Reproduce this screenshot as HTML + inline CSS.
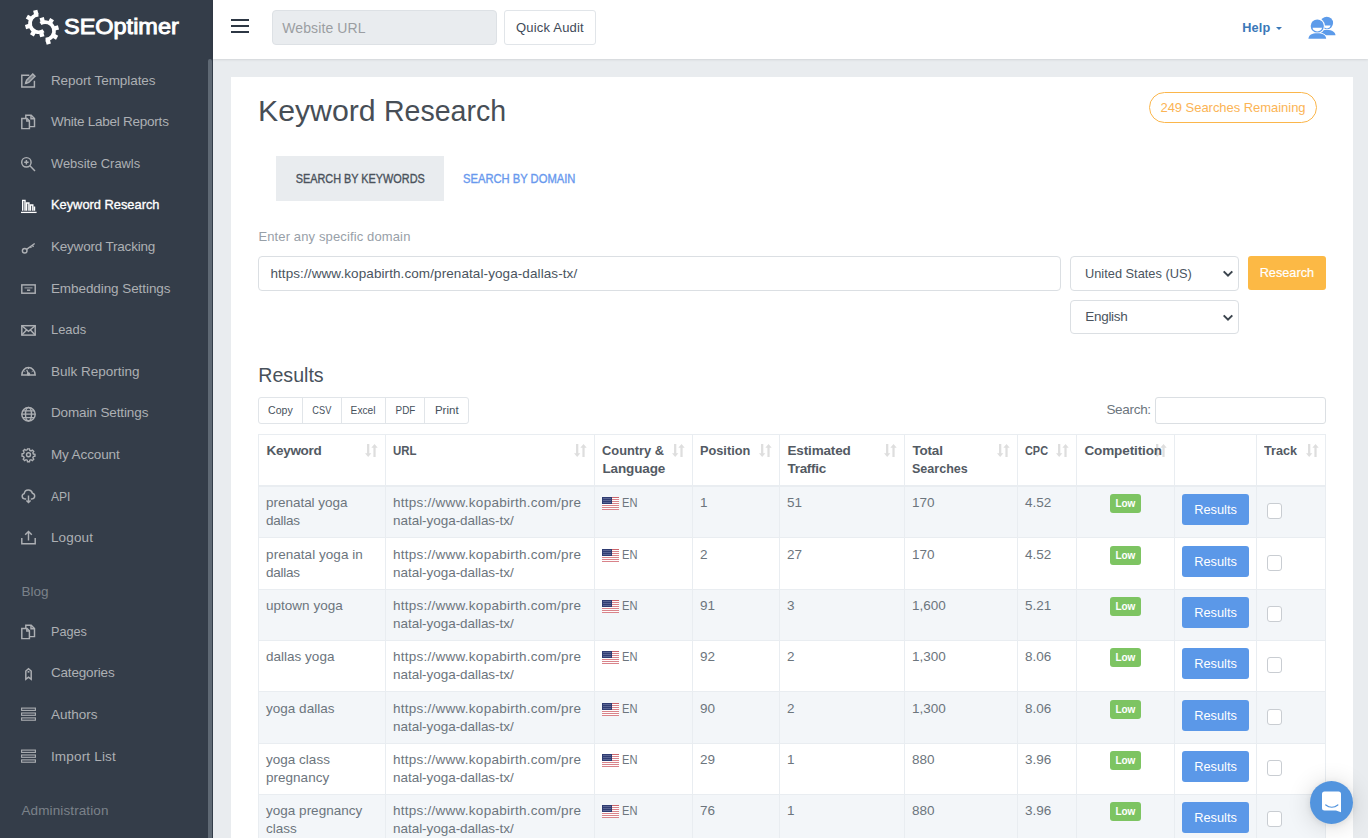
<!DOCTYPE html>
<html lang="en">
<head>
<meta charset="utf-8">
<title>Keyword Research</title>
<style>
*{box-sizing:border-box;}
html,body{margin:0;padding:0;}
body{width:1368px;height:838px;overflow:hidden;background:#e9ecef;font-family:"Liberation Sans",sans-serif;font-size:13.5px;color:#6c757d;position:relative;}
a{text-decoration:none;color:inherit;}
.t{display:inline-block;white-space:nowrap;}
/* sidebar */
#side{position:absolute;left:0;top:0;width:213px;height:838px;background:#343d49;overflow:hidden;}
#lt{position:absolute;left:64.3px;top:12.1px;-webkit-text-stroke:0.9px #fff;font-size:21.6px;line-height:30px;color:#fff;white-space:nowrap;}
#sb{position:absolute;left:208px;top:59px;width:4px;height:800px;border-radius:2px;background:#5f6974;}
.ni{display:block;position:absolute;left:50.9px;height:21.6px;color:#adb0b4;font-size:13.5px;line-height:21.6px;white-space:nowrap;}
.ni svg{position:absolute;left:-31px;width:17px;height:16px;fill:none;stroke:#adb0b4;stroke-width:1.45;}
.ni.act{color:#fff;-webkit-text-stroke:0.35px #fff;}
.ni.act svg{stroke:#fff;-webkit-text-stroke:0;}
.nt{position:absolute;left:21.5px;height:21.6px;color:#7b828a;font-size:13.5px;line-height:21.6px;white-space:nowrap;}
/* topbar */
#top{position:absolute;left:213px;top:0;width:1155px;height:59px;background:#fff;box-shadow:0 0 3px rgba(0,0,0,.18);}
#burger i{position:absolute;left:18px;width:18px;height:2px;background:#2d3744;}
#turl{position:absolute;left:59px;top:10px;width:225px;height:35px;background:#e9ecef;border:1px solid #dde1e5;border-radius:4px;color:#9b9ea2;font-size:14px;line-height:35.3px;padding-left:9.2px;white-space:nowrap;}
#qa{position:absolute;left:291px;top:10px;width:92px;height:35px;background:#fff;border:1px solid #e1e5e9;border-radius:3px;color:#3f4a58;font-size:13px;line-height:33.6px;text-align:center;white-space:nowrap;}
#help{position:absolute;left:1029.2px;top:18px;font-weight:bold;font-size:12.7px;line-height:20px;color:#3a78b8;white-space:nowrap;}
#caret{position:absolute;left:1063.2px;top:26.8px;width:0;height:0;border-left:3px solid transparent;border-right:3px solid transparent;border-top:3.2px solid #3a78b8;}
#usr{position:absolute;left:1093px;top:16px;}
/* card */
#card{position:absolute;left:231px;top:77px;width:1122px;height:780px;background:#fff;}
h1{position:absolute;left:26.6px;top:13.7px;margin:0;font-weight:normal;font-size:29.5px;line-height:40px;color:#474e56;white-space:nowrap;}
#badge{position:absolute;left:918px;top:15px;width:168px;height:31px;border:1px solid #fbb64b;border-radius:16px;color:#fbb455;font-size:13px;line-height:29px;text-align:center;white-space:nowrap;}
#tab1{position:absolute;left:45px;top:79px;width:168px;height:45px;background:#e9ecef;color:#4a525b;font-size:12px;line-height:46.1px;text-align:center;white-space:nowrap;-webkit-text-stroke:0.35px #4a525b;}
#tab2{position:absolute;left:231.5px;top:79px;height:45px;color:#6899ee;font-size:12px;line-height:46.1px;white-space:nowrap;-webkit-text-stroke:0.35px #6899ee;}
#lbl{position:absolute;left:27.4px;top:149.6px;font-size:13px;line-height:20px;color:#98a0a8;white-space:nowrap;}
.fc{position:absolute;background:#fff;border:1px solid #dbdfe3;border-radius:4px;color:#4a545e;font-size:13.5px;white-space:nowrap;}
#dom{left:27px;top:179px;width:803px;height:35px;padding-left:11.4px;line-height:33.8px;}
#sel1{left:839px;top:179px;width:169px;height:35px;padding-left:14.3px;line-height:33.8px;}
#sel2{left:839px;top:223px;width:169px;height:34px;padding-left:14.3px;line-height:31.2px;}
.fc svg{position:absolute;right:3.6px;top:13.2px;}
#sel2 svg{top:12.7px;}
#rs{position:absolute;left:1017px;top:179px;width:78px;height:34px;background:#fcb945;border-radius:3px;color:#fff;font-size:13.5px;line-height:33.2px;text-align:center;white-space:nowrap;-webkit-text-stroke:0.2px #fff;}
h2{position:absolute;left:27.3px;top:282.8px;margin:0;font-weight:normal;font-size:19.6px;line-height:30px;color:#48515b;white-space:nowrap;}
#bg{position:absolute;left:27px;top:320px;height:27px;display:flex;border:1px solid #e1e5e9;border-radius:3px;background:#fff;}
#bg span{display:block;height:25px;line-height:25.2px;font-size:11.5px;color:#46515c;text-align:center;border-right:1px solid #e1e5e9;white-space:nowrap;}
#bg span span{display:inline-block;border:0;width:auto;}
#bg>span:last-child{border-right:0;}
#sl{position:absolute;left:875.4px;top:323.3px;font-size:13.5px;line-height:20px;color:#6c757d;white-space:nowrap;}
#si{position:absolute;left:924px;top:320px;width:171px;height:27px;border:1px solid #dbdfe3;border-radius:3px;background:#fff;}
/* table */
#tbl{position:absolute;left:27px;top:357px;width:1068px;height:500px;border-top:1px solid #e9edf1;}
#hd{position:absolute;left:0;top:0;width:1068px;height:52px;border-bottom:2px solid #e9edf1;color:#535a63;font-weight:bold;}
.r{position:absolute;left:0;width:1068px;height:51.43px;border-bottom:1px solid #e9edf1;}
.r.o{background:#f3f6f9;}
.in{position:absolute;left:0;width:100%;height:100%;}
.c{position:absolute;top:0;height:100%;padding:7.3px 0 0 8.1px;font-size:13.5px;line-height:18px;white-space:nowrap;overflow:hidden;}
#hd .c{padding-top:7.2px;padding-left:8.45px;}
.h{position:relative;}
.vl{position:absolute;top:0;width:1px;height:500px;background:#e9edf1;}
.so{position:absolute;right:7.1px;top:9.2px;}
.low{position:absolute;left:33.9px;top:7px;width:31px;height:19px;border-radius:3px;background:#7dc462;color:#fff;font-weight:bold;font-size:10px;line-height:19.3px;text-align:center;}
.rb{position:absolute;left:8.2px;top:7px;width:67px;height:31px;border-radius:3px;background:#5b98e8;color:#fff;font-size:13.5px;line-height:31px;text-align:center;}
.cb{position:absolute;left:11.4px;top:16.3px;width:15px;height:15.5px;border:1px solid #c9cdd2;border-radius:3px;background:#fff;}
.fl{display:inline-block;vertical-align:-2.5px;margin-right:3.2px;}
#chat{position:absolute;left:1310px;top:781px;width:43px;height:43px;border-radius:50%;background:#5294de;box-shadow:0 1px 6px rgba(0,0,0,.08),0 2px 24px rgba(0,0,0,.16);}
#chat svg{position:absolute;left:12px;top:10.2px;}
</style>
</head>
<body>
<div id="side">
<svg width="40" height="40" viewBox="21 6.3 42 42" style="position:absolute;left:22px;top:7px"><path d="M38.28 14.41A9.2 9.2 0 1 0 43.61 31.32" fill="none" stroke="#fff" stroke-width="3.8"/><rect x="33.32" y="9.42" width="4.2" height="4.6" fill="#fff" transform="rotate(-105 35.42 11.72)"/><rect x="25.85" y="15.15" width="4.2" height="4.6" fill="#fff" transform="rotate(-150 27.95 17.45)"/><rect x="24.62" y="24.48" width="4.2" height="4.6" fill="#fff" transform="rotate(-195 26.72 26.78)"/><rect x="30.35" y="31.95" width="4.2" height="4.6" fill="#fff" transform="rotate(-240 32.45 34.25)"/><rect x="39.68" y="33.18" width="4.2" height="4.6" fill="#fff" transform="rotate(-285 41.78 35.48)"/><path d="M45.72 40.59A9.2 9.2 0 1 0 40.39 23.68" fill="none" stroke="#fff" stroke-width="3.8"/><rect x="46.48" y="40.98" width="4.2" height="4.6" fill="#fff" transform="rotate(-285 48.58 43.28)"/><rect x="53.95" y="35.25" width="4.2" height="4.6" fill="#fff" transform="rotate(-330 56.05 37.55)"/><rect x="55.18" y="25.92" width="4.2" height="4.6" fill="#fff" transform="rotate(-375 57.28 28.22)"/><rect x="49.45" y="18.45" width="4.2" height="4.6" fill="#fff" transform="rotate(-420 51.55 20.75)"/><rect x="40.12" y="17.22" width="4.2" height="4.6" fill="#fff" transform="rotate(-465 42.22 19.52)"/></svg>
<div id="lt"><span class="t" style="transform:scaleX(1.087);transform-origin:0 50%">SEOptimer</span></div>
<a class="ni" style="top:69.5px"><svg viewBox="0 0 17 16" style="top:3.3px"><path d="M9.3 2.2H1.8v11.8h12.6V7.8"/><path d="M5.6 10.4l1-3.2 6.2-6.2 2.2 2.2-6.2 6.2z" fill="#adb0b4" fill-opacity=".55"/><path d="M5.6 10.4l1.3-1.3" stroke-width="2.2"/></svg><span style="letter-spacing:-0.06px">Report Templates</span></a>
<a class="ni" style="top:111.1px"><svg viewBox="0 0 17 16" style="top:3.3px"><path d="M1.8 4.4h5.2l2.4 2.4v7.8H1.8z"/><path d="M6.8 4.4v2.6h2.6"/><path d="M5.8 4.2V1.2h5.4l3.3 3.3v8.1H9.6"/><path d="M11 1.2v3.5h3.5"/></svg><span style="letter-spacing:-0.24px">White Label Reports</span></a>
<a class="ni" style="top:152.7px"><svg viewBox="0 0 17 16" style="top:3.3px"><circle cx="6.4" cy="6.3" r="4.7"/><path d="M9.9 9.8L15 14.9"/><path d="M4.2 6.3h4.4M6.4 4.1v4.4"/></svg><span class="t" style="transform:scaleX(0.953);transform-origin:0 50%">Website Crawls</span></a>
<a class="ni act" style="top:194.3px"><svg viewBox="0 0 17 16" style="top:3.3px"><path d="M1 14.4h15.6" stroke-width="1.3"/><path d="M2.7 12.8V2.4h2.3v10.4M6.6 12.8V5h2.3v7.8M10.5 12.8V7h2.3v5.8M14.5 12.8V8.4" stroke-width="1.4"/></svg><span class="t" style="transform:scaleX(0.951);transform-origin:0 50%">Keyword Research</span></a>
<a class="ni" style="top:235.9px"><svg viewBox="0 0 17 16" style="top:3.3px"><circle cx="4.7" cy="11.7" r="2.3"/><path d="M6.6 10.3L14.7 4.5M12.3 6.2l1.2 1.7M10.4 7.6l.9 1.3"/></svg><span style="letter-spacing:-0.19px">Keyword Tracking</span></a>
<a class="ni" style="top:277.5px"><svg viewBox="0 0 17 16" style="top:3.3px"><rect x="1.8" y="3.9" width="13.4" height="8.3"/><path d="M4.5 6.9h8" stroke-width="0.9"/><path d="M7 9.2h3.2" stroke-width="1.5"/></svg><span style="letter-spacing:-0.07px">Embedding Settings</span></a>
<a class="ni" style="top:319.1px"><svg viewBox="0 0 17 16" style="top:3.3px"><rect x="1.8" y="3.7" width="13.4" height="9.4"/><path d="M1.8 3.7l6.7 5.6 6.7-5.6M1.8 13.1l5-5.3M15.2 13.1l-5-5.3"/></svg><span class="t" style="transform:scaleX(0.957);transform-origin:0 50%">Leads</span></a>
<a class="ni" style="top:360.7px"><svg viewBox="0 0 17 16" style="top:3.3px"><path d="M1.8 10.9a6.7 7.4 0 0 1 13.4 0z"/><path d="M8.5 10.2L6.7 5.8" stroke-width="1.3"/><circle cx="8.5" cy="10" r="1" fill="#adb0b4"/><path d="M8.5 3.8v1.3M4.2 7l1.1.8M12.8 7l-1.1.8" stroke-width="1"/></svg>Bulk Reporting</a>
<a class="ni" style="top:402.3px"><svg viewBox="0 0 17 16" style="top:3.3px"><circle cx="8.5" cy="8.2" r="6.7"/><ellipse cx="8.5" cy="8.2" rx="3" ry="6.7"/><path d="M1.8 8.2h13.4M2.9 4.8h11.2M2.9 11.6h11.2" stroke-width="1.2"/></svg><span style="letter-spacing:-0.11px">Domain Settings</span></a>
<a class="ni" style="top:443.9px"><svg viewBox="0 0 17 16" style="top:3.3px"><g transform="translate(8.5 7.7) scale(.86) translate(-8.5 -8)"><circle cx="8.5" cy="8" r="2.3" stroke-width="1.65"/><path stroke-width="1.65" d="M7.4 1.2h2.2l.4 1.8 1.4.6 1.6-1 1.6 1.6-1 1.6.6 1.4 1.8.4v2.2l-1.8.4-.6 1.4 1 1.6-1.6 1.6-1.6-1-1.4.6-.4 1.8H7.4l-.4-1.8-1.4-.6-1.6 1-1.6-1.6 1-1.6-.6-1.4-1.8-.4V6.9l1.8-.4.6-1.4-1-1.6 1.6-1.6 1.6 1 1.4-.6z"/></g></svg><span style="letter-spacing:-0.1px">My Account</span></a>
<a class="ni" style="top:485.5px"><svg viewBox="0 0 17 16" style="top:3.3px"><path d="M6.2 9.9H4.6a2.7 2.7 0 0 1-.4-5.3 4.2 4.2 0 0 1 8.2-.4 2.9 2.9 0 0 1-.2 5.7h-1.4"/><path d="M8.5 6.5v6.8M6.4 11.4l2.1 2.1 2.1-2.1"/></svg><span class="t" style="transform:scaleX(0.895);transform-origin:0 50%">API</span></a>
<a class="ni" style="top:527.1px"><svg viewBox="0 0 17 16" style="top:3.3px"><path d="M1.8 8v5.7h13.4V8"/><path d="M8.5 10.5V1.5M5.2 4.8l3.3-3.3 3.3 3.3"/></svg><span style="letter-spacing:0.16px">Logout</span></a>
<div class="nt" style="top:580.7px">Blog</div>
<a class="ni" style="top:620.8px"><svg viewBox="0 0 17 16" style="top:3.3px"><path d="M1.8 4.4h5.2l2.4 2.4v7.8H1.8z"/><path d="M6.8 4.4v2.6h2.6"/><path d="M5.8 4.2V1.2h5.4l3.3 3.3v8.1H9.6"/><path d="M11 1.2v3.5h3.5"/></svg><span class="t" style="transform:scaleX(0.938);transform-origin:0 50%">Pages</span></a>
<a class="ni" style="top:662.4px"><svg viewBox="0 0 17 16" style="top:3.3px"><path d="M5.8 13.3V5l2.7-2.4L11.2 5v8.3l-2.7-2.2z"/><path d="M7.6 5.8h1.8" stroke-width="1.7"/></svg><span style="letter-spacing:-0.17px">Categories</span></a>
<a class="ni" style="top:704px"><svg viewBox="0 0 17 16" style="top:3.3px"><g stroke-width="1.1"><rect x="1.6" y="1.1" width="13.8" height="2.3"/><rect x="1.6" y="6" width="13.8" height="2.3"/><rect x="1.6" y="10.9" width="13.8" height="2.3"/></g></svg>Authors</a>
<a class="ni" style="top:745.6px"><svg viewBox="0 0 17 16" style="top:3.3px"><g stroke-width="1.1"><rect x="1.6" y="1.1" width="13.8" height="2.3"/><rect x="1.6" y="6" width="13.8" height="2.3"/><rect x="1.6" y="10.9" width="13.8" height="2.3"/></g></svg><span style="letter-spacing:0.19px">Import List</span></a>
<div class="nt" style="top:799.8px"><span style="letter-spacing:0.11px">Administration</span></div>
<div id="sb"></div>
</div>
<div id="top">
<div id="burger"><i style="top:19px"></i><i style="top:24.6px"></i><i style="top:30.8px"></i></div>
<div id="turl"><span style="letter-spacing:0.12px">Website URL</span></div>
<div id="qa"><span style="letter-spacing:0.19px">Quick Audit</span></div>
<div id="help"><span style="letter-spacing:0.23px">Help</span></div><i id="caret"></i>
<svg id="usr" width="30" height="24" viewBox="1306 16 30 24">
<g fill="#5c9bea"><circle cx="1326.8" cy="23" r="6.3"/><path d="M1318 35.2c0-3.5 3-5.2 8.8-5.2s8.2 2 8.7 5.2z"/></g>
<circle cx="1317.3" cy="26" r="7.7" fill="#fff"/><path d="M1307 40c0-5 4-7.8 10.3-7.8s10.3 2.8 10.3 7.8z" fill="#fff"/>
<g fill="#5c9bea"><circle cx="1317.3" cy="26" r="6.6"/><path d="M1308.4 38.8c.4-3.8 3.5-5.5 8.9-5.5s8.5 1.7 8.9 5.5z"/></g>
<path d="M1312.6 27.7h9.4a4.7 3.7 0 0 1-9.4 0z" fill="#fff"/>
<path d="M1324.6 25.4h6a3.6 3.6 0 0 1-5.6 2.3z" fill="#fff"/>
</svg>
</div>
<div id="card">
<h1><span class="t" style="transform:scaleX(1.025);transform-origin:0 50%">Keyword</span> <span style="position:absolute;left:126px;top:0"><span class="t" style="transform:scaleX(0.967);transform-origin:0 50%">Research</span></span></h1>
<div id="badge"><span style="letter-spacing:-0.04px">249 Searches Remaining</span></div>
<div id="tab1"><span class="t" style="transform:scaleX(0.906);transform-origin:50% 50%">SEARCH BY KEYWORDS</span></div>
<div id="tab2"><span class="t" style="transform:scaleX(0.933);transform-origin:0 50%">SEARCH BY DOMAIN</span></div>
<div id="lbl"><span style="letter-spacing:0.13px">Enter any specific domain</span></div>
<div class="fc" id="dom"><span style="letter-spacing:0.09px">https://www.kopabirth.com/prenatal-yoga-dallas-tx/</span></div>
<div class="fc" id="sel1"><span class="t" style="transform:scaleX(0.948);transform-origin:0 50%">United States (US)</span><svg width="12" height="8" viewBox="0 0 12 8"><path d="M1.7 1.4L6 5.7l4.3-4.3" fill="none" stroke="#3b444d" stroke-width="2"/></svg></div>
<div class="fc" id="sel2"><span style="letter-spacing:-0.3px">English</span><svg width="12" height="8" viewBox="0 0 12 8"><path d="M1.7 1.4L6 5.7l4.3-4.3" fill="none" stroke="#3b444d" stroke-width="2"/></svg></div>
<div id="rs"><span class="t" style="transform:scaleX(0.943);transform-origin:50% 50%">Research</span></div>
<h2>Results</h2>
<div id="bg"><span style="width:44.1px"><span class="t" style="transform:scaleX(0.919);transform-origin:50% 50%">Copy</span></span><span style="width:39.1px"><span class="t" style="transform:scaleX(0.8);transform-origin:50% 50%">CSV</span></span><span style="width:43.7px"><span class="t" style="transform:scaleX(0.885);transform-origin:50% 50%">Excel</span></span><span style="width:39.5px"><span class="t" style="transform:scaleX(0.859);transform-origin:50% 50%">PDF</span></span><span style="width:42.8px">Print</span></div>
<div id="sl"><span style="letter-spacing:-0.3px">Search:</span></div>
<div id="si"></div>
<div id="tbl">
<div id="hd"><div class="c" style="left:0px;width:127px"><svg class="so" width="12.7" height="13.2" viewBox="0 0 13 14" preserveAspectRatio="none"><g fill="#dedede"><path d="M2.1 0h2.3v9.8h2.1L3.25 13.8 0 9.8h2.1z"/><path d="M8.6 13.8h2.3V4h2.1L9.75 0 6.5 4h2.1z"/></g></svg><span class="h"><span style="letter-spacing:-0.27px">Keyword</span></span></div><div class="c" style="left:127px;width:209px"><svg class="so" width="12.7" height="13.2" viewBox="0 0 13 14" preserveAspectRatio="none"><g fill="#dedede"><path d="M2.1 0h2.3v9.8h2.1L3.25 13.8 0 9.8h2.1z"/><path d="M8.6 13.8h2.3V4h2.1L9.75 0 6.5 4h2.1z"/></g></svg><span class="h"><span class="t" style="transform:scaleX(0.848);transform-origin:0 50%">URL</span></span></div><div class="c" style="left:336px;width:98px"><svg class="so" width="12.7" height="13.2" viewBox="0 0 13 14" preserveAspectRatio="none"><g fill="#dedede"><path d="M2.1 0h2.3v9.8h2.1L3.25 13.8 0 9.8h2.1z"/><path d="M8.6 13.8h2.3V4h2.1L9.75 0 6.5 4h2.1z"/></g></svg><span class="h"><span class="t" style="transform:scaleX(0.952);transform-origin:0 50%">Country &amp;</span><br><span style="letter-spacing:-0.13px">Language</span></span></div><div class="c" style="left:434px;width:87px"><svg class="so" width="12.7" height="13.2" viewBox="0 0 13 14" preserveAspectRatio="none"><g fill="#dedede"><path d="M2.1 0h2.3v9.8h2.1L3.25 13.8 0 9.8h2.1z"/><path d="M8.6 13.8h2.3V4h2.1L9.75 0 6.5 4h2.1z"/></g></svg><span class="h"><span class="t" style="transform:scaleX(0.944);transform-origin:0 50%">Position</span></span></div><div class="c" style="left:521px;width:125px"><svg class="so" width="12.7" height="13.2" viewBox="0 0 13 14" preserveAspectRatio="none"><g fill="#dedede"><path d="M2.1 0h2.3v9.8h2.1L3.25 13.8 0 9.8h2.1z"/><path d="M8.6 13.8h2.3V4h2.1L9.75 0 6.5 4h2.1z"/></g></svg><span class="h"><span style="letter-spacing:-0.14px">Estimated</span><br><span style="letter-spacing:-0.28px">Traffic</span></span></div><div class="c" style="left:646px;width:113px"><svg class="so" width="12.7" height="13.2" viewBox="0 0 13 14" preserveAspectRatio="none"><g fill="#dedede"><path d="M2.1 0h2.3v9.8h2.1L3.25 13.8 0 9.8h2.1z"/><path d="M8.6 13.8h2.3V4h2.1L9.75 0 6.5 4h2.1z"/></g></svg><span class="h"><span style="letter-spacing:-0.2px">Total</span><br><span class="t" style="transform:scaleX(0.929);transform-origin:0 50%">Searches</span></span></div><div class="c" style="left:759px;width:59px"><svg class="so" width="12.7" height="13.2" viewBox="0 0 13 14" preserveAspectRatio="none"><g fill="#dedede"><path d="M2.1 0h2.3v9.8h2.1L3.25 13.8 0 9.8h2.1z"/><path d="M8.6 13.8h2.3V4h2.1L9.75 0 6.5 4h2.1z"/></g></svg><span class="h"><span class="t" style="transform:scaleX(0.807);transform-origin:0 50%">CPC</span></span></div><div class="c" style="left:818px;width:98px"><svg class="so" width="12.7" height="13.2" viewBox="0 0 13 14" preserveAspectRatio="none"><g fill="#dedede"><path d="M2.1 0h2.3v9.8h2.1L3.25 13.8 0 9.8h2.1z"/><path d="M8.6 13.8h2.3V4h2.1L9.75 0 6.5 4h2.1z"/></g></svg><span class="h"><span style="letter-spacing:-0.11px">Competition</span></span></div><div class="c" style="left:916px;width:82px"><span class="h"></span></div><div class="c" style="left:998px;width:70px"><svg class="so" width="12.7" height="13.2" viewBox="0 0 13 14" preserveAspectRatio="none"><g fill="#dedede"><path d="M2.1 0h2.3v9.8h2.1L3.25 13.8 0 9.8h2.1z"/><path d="M8.6 13.8h2.3V4h2.1L9.75 0 6.5 4h2.1z"/></g></svg><span class="h"><span class="t" style="transform:scaleX(0.937);transform-origin:0 50%">Track</span></span></div></div>
<div class="r o" style="top:52px;height:51px"><div class="in" style="top:0px"><div class="c" style="left:0px;width:127px"><span style="letter-spacing:-0.04px">prenatal yoga</span><br><span style="letter-spacing:-0.26px">dallas</span></div><div class="c" style="left:127px;width:209px"><span style="letter-spacing:0.25px">https://www.kopabirth.com/pre</span><br><span style="letter-spacing:-0.05px">natal-yoga-dallas-tx/</span></div><div class="c" style="left:336px;width:98px"><svg class="fl" width="17" height="13" viewBox="0 0 17 13" shape-rendering="crispEdges"><rect width="17" height="13" fill="#fdfdfd"/><g fill="#d9838a"><rect y="0" width="17" height="1" fill="#cc666c"/><rect y="2" width="17" height="1"/><rect y="4" width="17" height="1"/><rect y="6" width="17" height="1"/><rect y="8" width="17" height="1"/><rect y="10" width="17" height="1"/><rect y="12" width="17" height="1"/></g><rect width="10" height="7" fill="#2f3c72"/><g fill="#5a6594"><rect x="1" y="1" width="8" height="1"/><rect x="1" y="3" width="8" height="1"/><rect x="1" y="5" width="8" height="1"/></g></svg><span class="t" style="transform:scaleX(0.824);transform-origin:0 50%">EN</span></div><div class="c" style="left:434px;width:87px">1</div><div class="c" style="left:521px;width:125px">51</div><div class="c" style="left:646px;width:113px">170</div><div class="c" style="left:759px;width:59px">4.52</div><div class="c" style="left:818px;width:98px"><span class="low">Low</span></div><div class="c" style="left:916px;width:82px"><span class="rb"><span class="t" style="transform:scaleX(0.948);transform-origin:50% 50%">Results</span></span></div><div class="c" style="left:998px;width:70px"><span class="cb"></span></div></div></div>
<div class="r e" style="top:103px;height:52px"><div class="in" style="top:1px"><div class="c" style="left:0px;width:127px"><span style="letter-spacing:0.04px">prenatal yoga in</span><br><span style="letter-spacing:-0.26px">dallas</span></div><div class="c" style="left:127px;width:209px"><span style="letter-spacing:0.25px">https://www.kopabirth.com/pre</span><br><span style="letter-spacing:-0.05px">natal-yoga-dallas-tx/</span></div><div class="c" style="left:336px;width:98px"><svg class="fl" width="17" height="13" viewBox="0 0 17 13" shape-rendering="crispEdges"><rect width="17" height="13" fill="#fdfdfd"/><g fill="#d9838a"><rect y="0" width="17" height="1" fill="#cc666c"/><rect y="2" width="17" height="1"/><rect y="4" width="17" height="1"/><rect y="6" width="17" height="1"/><rect y="8" width="17" height="1"/><rect y="10" width="17" height="1"/><rect y="12" width="17" height="1"/></g><rect width="10" height="7" fill="#2f3c72"/><g fill="#5a6594"><rect x="1" y="1" width="8" height="1"/><rect x="1" y="3" width="8" height="1"/><rect x="1" y="5" width="8" height="1"/></g></svg><span class="t" style="transform:scaleX(0.824);transform-origin:0 50%">EN</span></div><div class="c" style="left:434px;width:87px">2</div><div class="c" style="left:521px;width:125px">27</div><div class="c" style="left:646px;width:113px">170</div><div class="c" style="left:759px;width:59px">4.52</div><div class="c" style="left:818px;width:98px"><span class="low">Low</span></div><div class="c" style="left:916px;width:82px"><span class="rb"><span class="t" style="transform:scaleX(0.948);transform-origin:50% 50%">Results</span></span></div><div class="c" style="left:998px;width:70px"><span class="cb"></span></div></div></div>
<div class="r o" style="top:155px;height:51px"><div class="in" style="top:0px"><div class="c" style="left:0px;width:127px">uptown yoga</div><div class="c" style="left:127px;width:209px"><span style="letter-spacing:0.25px">https://www.kopabirth.com/pre</span><br><span style="letter-spacing:-0.05px">natal-yoga-dallas-tx/</span></div><div class="c" style="left:336px;width:98px"><svg class="fl" width="17" height="13" viewBox="0 0 17 13" shape-rendering="crispEdges"><rect width="17" height="13" fill="#fdfdfd"/><g fill="#d9838a"><rect y="0" width="17" height="1" fill="#cc666c"/><rect y="2" width="17" height="1"/><rect y="4" width="17" height="1"/><rect y="6" width="17" height="1"/><rect y="8" width="17" height="1"/><rect y="10" width="17" height="1"/><rect y="12" width="17" height="1"/></g><rect width="10" height="7" fill="#2f3c72"/><g fill="#5a6594"><rect x="1" y="1" width="8" height="1"/><rect x="1" y="3" width="8" height="1"/><rect x="1" y="5" width="8" height="1"/></g></svg><span class="t" style="transform:scaleX(0.824);transform-origin:0 50%">EN</span></div><div class="c" style="left:434px;width:87px">91</div><div class="c" style="left:521px;width:125px">3</div><div class="c" style="left:646px;width:113px">1,600</div><div class="c" style="left:759px;width:59px">5.21</div><div class="c" style="left:818px;width:98px"><span class="low">Low</span></div><div class="c" style="left:916px;width:82px"><span class="rb"><span class="t" style="transform:scaleX(0.948);transform-origin:50% 50%">Results</span></span></div><div class="c" style="left:998px;width:70px"><span class="cb"></span></div></div></div>
<div class="r e" style="top:206px;height:51px"><div class="in" style="top:0px"><div class="c" style="left:0px;width:127px">dallas yoga</div><div class="c" style="left:127px;width:209px"><span style="letter-spacing:0.25px">https://www.kopabirth.com/pre</span><br><span style="letter-spacing:-0.05px">natal-yoga-dallas-tx/</span></div><div class="c" style="left:336px;width:98px"><svg class="fl" width="17" height="13" viewBox="0 0 17 13" shape-rendering="crispEdges"><rect width="17" height="13" fill="#fdfdfd"/><g fill="#d9838a"><rect y="0" width="17" height="1" fill="#cc666c"/><rect y="2" width="17" height="1"/><rect y="4" width="17" height="1"/><rect y="6" width="17" height="1"/><rect y="8" width="17" height="1"/><rect y="10" width="17" height="1"/><rect y="12" width="17" height="1"/></g><rect width="10" height="7" fill="#2f3c72"/><g fill="#5a6594"><rect x="1" y="1" width="8" height="1"/><rect x="1" y="3" width="8" height="1"/><rect x="1" y="5" width="8" height="1"/></g></svg><span class="t" style="transform:scaleX(0.824);transform-origin:0 50%">EN</span></div><div class="c" style="left:434px;width:87px">92</div><div class="c" style="left:521px;width:125px">2</div><div class="c" style="left:646px;width:113px">1,300</div><div class="c" style="left:759px;width:59px">8.06</div><div class="c" style="left:818px;width:98px"><span class="low">Low</span></div><div class="c" style="left:916px;width:82px"><span class="rb"><span class="t" style="transform:scaleX(0.948);transform-origin:50% 50%">Results</span></span></div><div class="c" style="left:998px;width:70px"><span class="cb"></span></div></div></div>
<div class="r o" style="top:257px;height:52px"><div class="in" style="top:1px"><div class="c" style="left:0px;width:127px">yoga dallas</div><div class="c" style="left:127px;width:209px"><span style="letter-spacing:0.25px">https://www.kopabirth.com/pre</span><br><span style="letter-spacing:-0.05px">natal-yoga-dallas-tx/</span></div><div class="c" style="left:336px;width:98px"><svg class="fl" width="17" height="13" viewBox="0 0 17 13" shape-rendering="crispEdges"><rect width="17" height="13" fill="#fdfdfd"/><g fill="#d9838a"><rect y="0" width="17" height="1" fill="#cc666c"/><rect y="2" width="17" height="1"/><rect y="4" width="17" height="1"/><rect y="6" width="17" height="1"/><rect y="8" width="17" height="1"/><rect y="10" width="17" height="1"/><rect y="12" width="17" height="1"/></g><rect width="10" height="7" fill="#2f3c72"/><g fill="#5a6594"><rect x="1" y="1" width="8" height="1"/><rect x="1" y="3" width="8" height="1"/><rect x="1" y="5" width="8" height="1"/></g></svg><span class="t" style="transform:scaleX(0.824);transform-origin:0 50%">EN</span></div><div class="c" style="left:434px;width:87px">90</div><div class="c" style="left:521px;width:125px">2</div><div class="c" style="left:646px;width:113px">1,300</div><div class="c" style="left:759px;width:59px">8.06</div><div class="c" style="left:818px;width:98px"><span class="low">Low</span></div><div class="c" style="left:916px;width:82px"><span class="rb"><span class="t" style="transform:scaleX(0.948);transform-origin:50% 50%">Results</span></span></div><div class="c" style="left:998px;width:70px"><span class="cb"></span></div></div></div>
<div class="r e" style="top:309px;height:51px"><div class="in" style="top:0px"><div class="c" style="left:0px;width:127px">yoga class<br>pregnancy</div><div class="c" style="left:127px;width:209px"><span style="letter-spacing:0.25px">https://www.kopabirth.com/pre</span><br><span style="letter-spacing:-0.05px">natal-yoga-dallas-tx/</span></div><div class="c" style="left:336px;width:98px"><svg class="fl" width="17" height="13" viewBox="0 0 17 13" shape-rendering="crispEdges"><rect width="17" height="13" fill="#fdfdfd"/><g fill="#d9838a"><rect y="0" width="17" height="1" fill="#cc666c"/><rect y="2" width="17" height="1"/><rect y="4" width="17" height="1"/><rect y="6" width="17" height="1"/><rect y="8" width="17" height="1"/><rect y="10" width="17" height="1"/><rect y="12" width="17" height="1"/></g><rect width="10" height="7" fill="#2f3c72"/><g fill="#5a6594"><rect x="1" y="1" width="8" height="1"/><rect x="1" y="3" width="8" height="1"/><rect x="1" y="5" width="8" height="1"/></g></svg><span class="t" style="transform:scaleX(0.824);transform-origin:0 50%">EN</span></div><div class="c" style="left:434px;width:87px">29</div><div class="c" style="left:521px;width:125px">1</div><div class="c" style="left:646px;width:113px">880</div><div class="c" style="left:759px;width:59px">3.96</div><div class="c" style="left:818px;width:98px"><span class="low">Low</span></div><div class="c" style="left:916px;width:82px"><span class="rb"><span class="t" style="transform:scaleX(0.948);transform-origin:50% 50%">Results</span></span></div><div class="c" style="left:998px;width:70px"><span class="cb"></span></div></div></div>
<div class="r o" style="top:360px;height:52px"><div class="in" style="top:0px"><div class="c" style="left:0px;width:127px">yoga pregnancy<br>class</div><div class="c" style="left:127px;width:209px"><span style="letter-spacing:0.25px">https://www.kopabirth.com/pre</span><br><span style="letter-spacing:-0.05px">natal-yoga-dallas-tx/</span></div><div class="c" style="left:336px;width:98px"><svg class="fl" width="17" height="13" viewBox="0 0 17 13" shape-rendering="crispEdges"><rect width="17" height="13" fill="#fdfdfd"/><g fill="#d9838a"><rect y="0" width="17" height="1" fill="#cc666c"/><rect y="2" width="17" height="1"/><rect y="4" width="17" height="1"/><rect y="6" width="17" height="1"/><rect y="8" width="17" height="1"/><rect y="10" width="17" height="1"/><rect y="12" width="17" height="1"/></g><rect width="10" height="7" fill="#2f3c72"/><g fill="#5a6594"><rect x="1" y="1" width="8" height="1"/><rect x="1" y="3" width="8" height="1"/><rect x="1" y="5" width="8" height="1"/></g></svg><span class="t" style="transform:scaleX(0.824);transform-origin:0 50%">EN</span></div><div class="c" style="left:434px;width:87px">76</div><div class="c" style="left:521px;width:125px">1</div><div class="c" style="left:646px;width:113px">880</div><div class="c" style="left:759px;width:59px">3.96</div><div class="c" style="left:818px;width:98px"><span class="low">Low</span></div><div class="c" style="left:916px;width:82px"><span class="rb"><span class="t" style="transform:scaleX(0.948);transform-origin:50% 50%">Results</span></span></div><div class="c" style="left:998px;width:70px"><span class="cb"></span></div></div></div>
<div class="r e" style="top:412px;height:51px"><div class="in" style="top:0px"><div class="c" style="left:0px;width:127px">pregnancy yoga<br>class</div><div class="c" style="left:127px;width:209px"><span style="letter-spacing:0.25px">https://www.kopabirth.com/pre</span><br><span style="letter-spacing:-0.05px">natal-yoga-dallas-tx/</span></div><div class="c" style="left:336px;width:98px"><svg class="fl" width="17" height="13" viewBox="0 0 17 13" shape-rendering="crispEdges"><rect width="17" height="13" fill="#fdfdfd"/><g fill="#d9838a"><rect y="0" width="17" height="1" fill="#cc666c"/><rect y="2" width="17" height="1"/><rect y="4" width="17" height="1"/><rect y="6" width="17" height="1"/><rect y="8" width="17" height="1"/><rect y="10" width="17" height="1"/><rect y="12" width="17" height="1"/></g><rect width="10" height="7" fill="#2f3c72"/><g fill="#5a6594"><rect x="1" y="1" width="8" height="1"/><rect x="1" y="3" width="8" height="1"/><rect x="1" y="5" width="8" height="1"/></g></svg><span class="t" style="transform:scaleX(0.824);transform-origin:0 50%">EN</span></div><div class="c" style="left:434px;width:87px">45</div><div class="c" style="left:521px;width:125px">1</div><div class="c" style="left:646px;width:113px">880</div><div class="c" style="left:759px;width:59px">3.96</div><div class="c" style="left:818px;width:98px"><span class="low">Low</span></div><div class="c" style="left:916px;width:82px"><span class="rb"><span class="t" style="transform:scaleX(0.948);transform-origin:50% 50%">Results</span></span></div><div class="c" style="left:998px;width:70px"><span class="cb"></span></div></div></div>
<i class="vl" style="left:0px"></i><i class="vl" style="left:127px"></i><i class="vl" style="left:336px"></i><i class="vl" style="left:434px"></i><i class="vl" style="left:521px"></i><i class="vl" style="left:646px"></i><i class="vl" style="left:759px"></i><i class="vl" style="left:818px"></i><i class="vl" style="left:916px"></i><i class="vl" style="left:998px"></i><i class="vl" style="left:1067px"></i></div>
</div>
<div id="chat"><svg width="20" height="22" viewBox="0 0 20 22"><path d="M2.5 0.5h14a2.5 2.5 0 0 1 2.5 2.5v18.2l-5-1.7h-11.5a2.5 2.5 0 0 1-2.5-2.5v-14a2.5 2.5 0 0 1 2.5-2.5z" fill="#fff"/><path d="M3.8 14c3.6 2.8 8.4 2.8 12 0" fill="none" stroke="#5294de" stroke-width="1.3" stroke-linecap="round"/></svg></div>
</body>
</html>
